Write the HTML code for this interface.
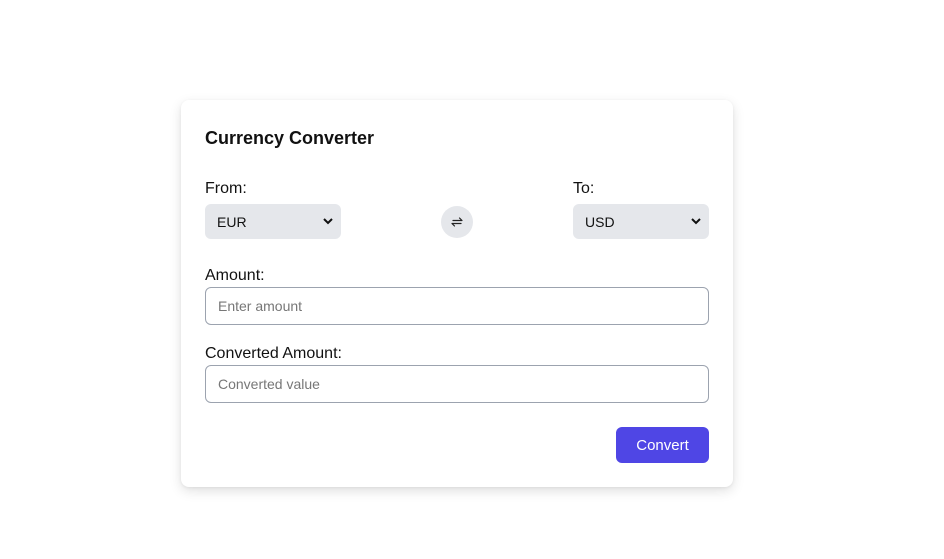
<!DOCTYPE html>
<html><head><style>
body{margin:0;width:944px;height:559px;background:#fff;font-family:"Liberation Sans",sans-serif;position:relative;overflow:hidden}
.card{position:absolute;left:181px;top:100px;width:552px;height:387px;background:#fff;border-radius:8px;box-shadow:0 4px 12px rgba(0,0,0,0.12),0 1px 3px rgba(0,0,0,0.06)}
h1{position:absolute;left:205px;top:128px;margin:0;font-size:18px;font-weight:bold;color:#111}
.lbl{position:absolute;font-size:16px;color:#111}
.sel{position:absolute;height:35px;width:136px;background:#e5e7eb;border-radius:6px;font-size:14px;color:#111}
.sel span{position:absolute;left:12px;top:10px}
.sel svg{position:absolute;right:8px;top:14px}
.inp{position:absolute;left:205px;width:502px;height:36px;border:1px solid #9ca3af;border-radius:6px;font-size:14px;color:#777}
.inp span{position:absolute;left:12px;top:10px}
.btn{position:absolute;left:616px;top:427px;width:93px;height:36px;background:#4f46e5;border-radius:6px;color:#fff;font-size:15px;text-align:center;line-height:37px}
.sw{position:absolute;left:441px;top:206px;width:32px;height:32px;border-radius:50%;background:#e5e7eb}
</style></head><body>
<div class="card"></div>
<h1>Currency Converter</h1>
<div class="lbl" style="left:205px;top:180px">From:</div>
<div class="lbl" style="left:573px;top:180px">To:</div>
<div class="sel" style="left:205px;top:204px"><span>EUR</span><svg width="10" height="7" viewBox="0 0 10 7"><path d="M1 1l4 4 4-4" stroke="#111" stroke-width="2" fill="none"/></svg></div>
<div class="sel" style="left:573px;top:204px"><span>USD</span><svg width="10" height="7" viewBox="0 0 10 7"><path d="M1 1l4 4 4-4" stroke="#111" stroke-width="2" fill="none"/></svg></div>
<div class="sw"><svg width="32" height="32" viewBox="0 0 32 32"><path d="M12 14.5h9l-2.5-2.5M20 17.5h-9l2.5 2.5" stroke="#222" stroke-width="1.2" fill="none" stroke-linecap="round" stroke-linejoin="round"/></svg></div>
<div class="lbl" style="left:205px;top:267px">Amount:</div>
<div class="inp" style="top:287px"><span>Enter amount</span></div>
<div class="lbl" style="left:205px;top:345px">Converted Amount:</div>
<div class="inp" style="top:365px"><span>Converted value</span></div>
<div class="btn">Convert</div>
</body></html>
